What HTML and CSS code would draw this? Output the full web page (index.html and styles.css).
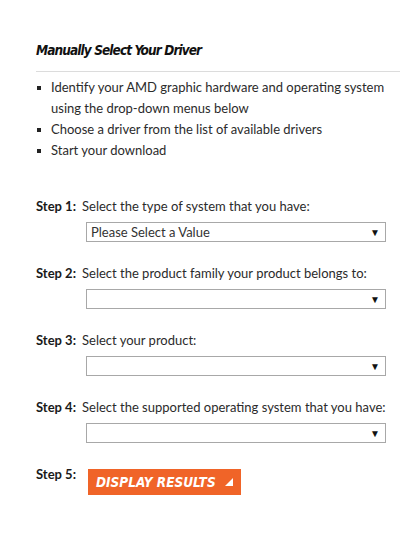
FILE: index.html
```html
<!DOCTYPE html>
<html lang="en">
<head>
<meta charset="utf-8">
<title>Manually Select Your Driver</title>
<link rel="stylesheet" href="styles.css">
</head>
<body>
<div class="page">
  <h1 class="title">Manually Select Your Driver</h1>
  <div class="rule"></div>
  <ul class="bullets">
    <li>Identify your AMD graphic hardware and operating system using the drop-down menus below</li>
    <li>Choose a driver from the list of available drivers</li>
    <li>Start your download</li>
  </ul>
  <div class="steps">
    <div class="step">
      <span class="step-label">Step 1:</span>
      <span class="step-text">Select the type of system that you have:</span>
      <div class="select"><span class="select-value">Please Select a Value</span><span class="arrow">&#9660;</span></div>
    </div>
    <div class="step">
      <span class="step-label">Step 2:</span>
      <span class="step-text">Select the product family your product belongs to:</span>
      <div class="select"><span class="select-value"></span><span class="arrow">&#9660;</span></div>
    </div>
    <div class="step">
      <span class="step-label">Step 3:</span>
      <span class="step-text">Select your product:</span>
      <div class="select"><span class="select-value"></span><span class="arrow">&#9660;</span></div>
    </div>
    <div class="step">
      <span class="step-label">Step 4:</span>
      <span class="step-text">Select the supported operating system that you have:</span>
      <div class="select"><span class="select-value"></span><span class="arrow">&#9660;</span></div>
    </div>
    <div class="step step-last">
      <span class="step-label">Step 5:</span>
      <button class="btn" type="button">DISPLAY RESULTS <span class="btn-tri"></span></button>
    </div>
  </div>
</div>
</body>
</html>
```

FILE: styles.css
```css
html, body {
  margin: 0;
  padding: 0;
  background: #ffffff;
}
body {
  font-family: Lato, "Open Sans", sans-serif;
  font-size: 13px;
  color: #2b2b2b;
}
.page {
  padding: 40px 0 0 36px;
}
.title {
  margin: 0;
  font-family: "DejaVu Sans Condensed", "DejaVu Sans", sans-serif;
  font-weight: bold;
  font-style: italic;
  font-size: 13.5px;
  line-height: 20px;
  letter-spacing: -0.9px;
  color: #111;
}
.rule {
  margin-top: 11px;
  height: 1px;
  background: #dcdcdc;
}
.bullets {
  margin: 5px 0 0 0;
  padding: 0 10px 0 15px;
  list-style: none;
  line-height: 21px;
}
.bullets li {
  position: relative;
}
.bullets li::before {
  content: "";
  position: absolute;
  left: -14px;
  top: 9px;
  width: 4px;
  height: 4px;
  background: #222;
}
.steps {
  margin-top: 35px;
  padding-right: 10px;
}
.step {
  display: grid;
  grid-template-columns: 46px 1fr;
  line-height: 21px;
  margin-bottom: 21px;
}
.step-label {
  font-weight: bold;
  color: #1a1a1a;
}
.step-text {
  color: #2b2b2b;
}
.select {
  grid-column: 2;
  margin: 5px 0 0 4px;
  width: 300px;
  height: 20px;
  box-sizing: border-box;
  border: 1px solid #a8a8a8;
  display: flex;
  align-items: center;
  justify-content: space-between;
  padding: 0 5px 0 4px;
  background: #fff;
}
.select-value {
  font-size: 13px;
  line-height: 18px;
  color: #333;
}
.arrow {
  font-size: 10px;
  line-height: 18px;
  color: #111;
}
.step-last {
  align-items: start;
}
.btn {
  justify-self: start;
  margin: 5px 0 0 6px;
  height: 26px;
  padding: 0 8px 0 8px;
  border: none;
  background: #f06428;
  color: #fff;
  font-family: "DejaVu Sans Condensed", "DejaVu Sans", sans-serif;
  font-weight: bold;
  font-style: italic;
  font-size: 13.5px;
  letter-spacing: 0;
  display: flex;
  align-items: center;
  gap: 6px;
  cursor: pointer;
}
.btn-tri {
  display: inline-block;
  width: 0;
  height: 0;
  border-left: 8px solid transparent;
  border-bottom: 8px solid #fff;
  margin-left: 3px;
}
```
